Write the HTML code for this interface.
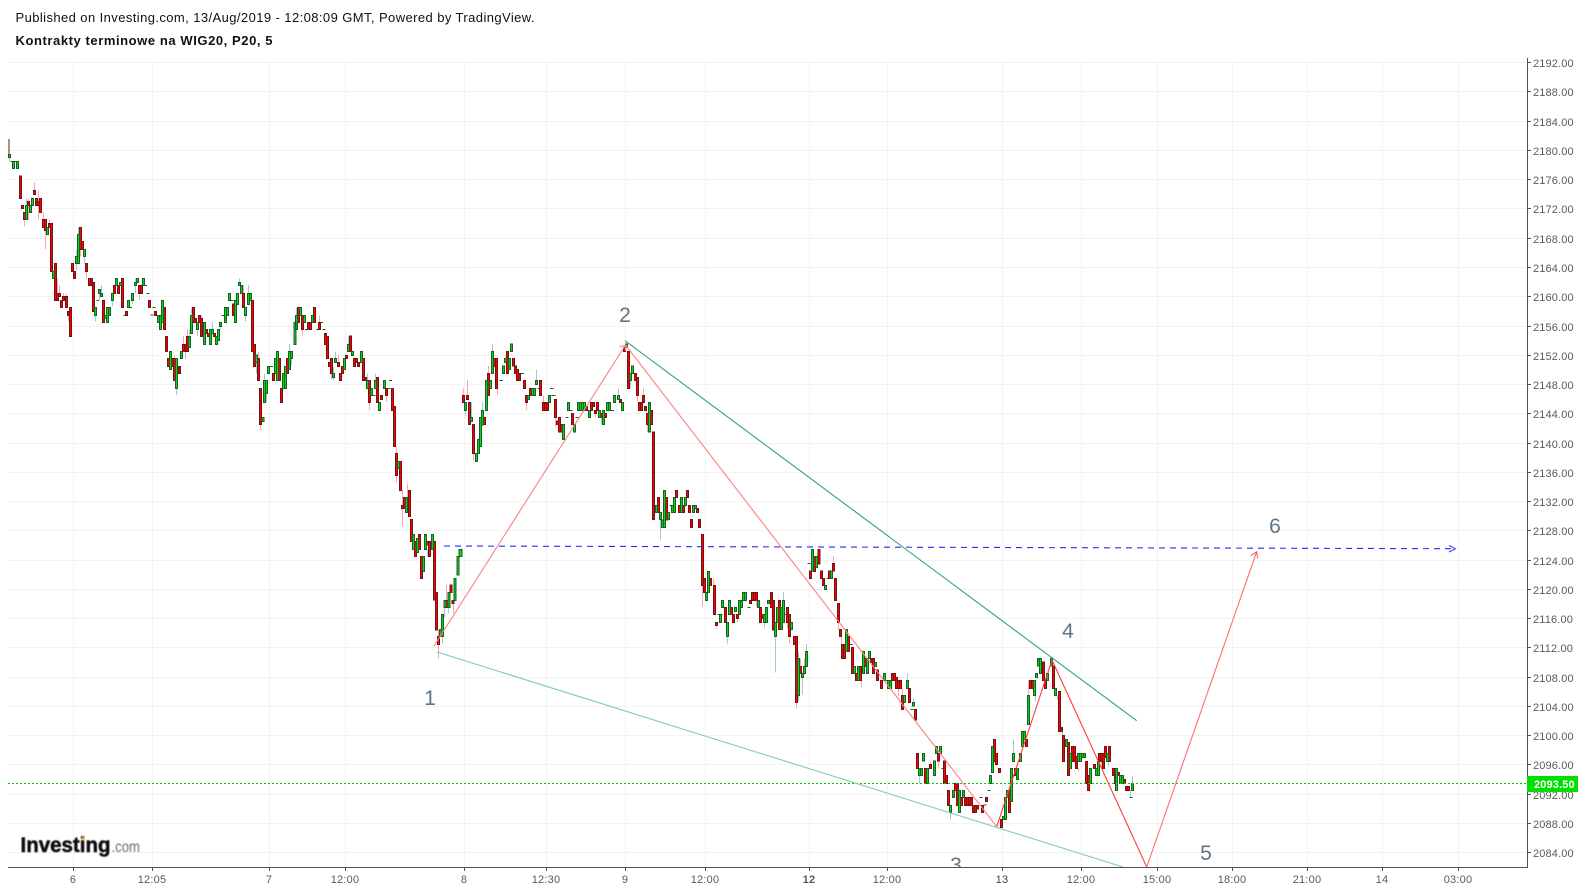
<!DOCTYPE html>
<html><head><meta charset="utf-8"><title>Kontrakty terminowe na WIG20</title>
<style>html,body{margin:0;padding:0;background:#fff;width:1585px;height:892px;overflow:hidden}svg{display:block;font-family:"Liberation Sans",Arial,sans-serif}</style></head>
<body>
<svg width="1585" height="892" viewBox="0 0 1585 892" xmlns="http://www.w3.org/2000/svg">
<defs><clipPath id="c"><rect x="8" y="40" width="1519" height="827.5"/></clipPath>
<filter id="b" x="-5%" y="-20%" width="110%" height="140%"><feGaussianBlur stdDeviation="0.4"/></filter>
<style>.wr{fill:none;stroke:#ffa3b3;stroke-width:3}.wg{fill:none;stroke:#a3cbd2;stroke-width:3}.br{fill:#f00;stroke:#6e1414;stroke-width:3}.bg{fill:#0d0;stroke:#1d5a30;stroke-width:3}.d{fill:none;stroke:#1d5a30;stroke-width:3}</style></defs>
<text x="15.5" y="22" font-size="13" fill="#111" textLength="519">Published on Investing.com, 13/Aug/2019 - 12:08:09 GMT, Powered by TradingView.</text>
<text x="15.5" y="45" font-size="13" font-weight="bold" fill="#111" textLength="257">Kontrakty terminowe na WIG20, P20, 5</text>
<g stroke="#f3f3f3" stroke-width="1" shape-rendering="crispEdges" fill="none">
<path d="M8 62.5H1527M8 91.5H1527M8 121.5H1527M8 150.5H1527M8 179.5H1527M8 208.5H1527M8 238.5H1527M8 267.5H1527M8 296.5H1527M8 326.5H1527M8 355.5H1527M8 384.5H1527M8 413.5H1527M8 443.5H1527M8 472.5H1527M8 501.5H1527M8 530.5H1527M8 560.5H1527M8 589.5H1527M8 618.5H1527M8 647.5H1527M8 677.5H1527M8 706.5H1527M8 735.5H1527M8 764.5H1527M8 794.5H1527M8 823.5H1527M8 852.5H1527"/>
<path d="M73.5 62V868M152.5 62V868M269.5 62V868M345.5 62V868M464.5 62V868M546.5 62V868M625.5 62V868M705.5 62V868M809.5 62V868M887.5 62V868M1002.5 62V868M1081.5 62V868M1157.5 62V868M1232.5 62V868M1307.5 62V868M1382.5 62V868M1458.5 62V868"/>
</g>
<g clip-path="url(#c)">
<g shape-rendering="crispEdges">
<g transform="translate(.5,130) scale(.33333)">
<path class="wr" d="M102 158V181M114 181V268M84 205V268M72 269V290M129 248V290M135 302V357M147 268V280M171 445V490M177 465V490M189 490V500M198 490V500M204 556V575M240 358V380M258 425V445M417 490V510M522 675V690M549 618V643M561 598V619M603 556V570M729 465V490M774 664V685M780 884V900M906 598V618M957 556V578M993 731V748M1014 675V697"/>
<path class="wg" d="M27 83V94M78 205V226M228 358V422M234 291V313M252 380V400M285 556V575M297 490V510M303 465V490M336 511V530M396 512V522M405 445V490M528 775V795M555 664V685M567 598V619M573 533V556M591 598V618M636 576V598M660 590V598M717 445V457M735 556V575M744 465V490M768 697V730M792 730V752M798 775V818M867 642V664M873 685V707M888 533V556M999 710V750M1005 664V685M1044 619V643"/>
<path class="d" d="M30 94H55M288 511H296M369 556H383M387 532H395M429 466H440M438 490H447M456 532H465M450 555H459M663 556H672M690 511H699M807 709H817M914 598H932M948 598H957M958 577H967M966 598H975"/>
<path d="M25.5 27V75" stroke="#6e1414" stroke-width="3" fill="none"/>
<path class="br" d="M57 138h6V206h-6zM63 226h6V236h-6zM69 247h6V269h-6zM81 214h6V226h-6zM99 181h6V194h-6zM105 205h6V226h-6zM111 214h6V226h-6zM117 205h6V248h-6zM126 269h6V292h-6zM132 269h6V302h-6zM144 280h6V292h-6zM150 280h6V425h-6zM162 400h6V512h-6zM168 490h6V512h-6zM174 490h6V500h-6zM180 512h6V533h-6zM186 500h6V512h-6zM195 500h6V533h-6zM201 545h6V556h-6zM207 533h6V620h-6zM213 400h6V425h-6zM219 424h6V445h-6zM237 292h6V358h-6zM243 335h6V358h-6zM255 400h6V425h-6zM264 445h6V467h-6zM270 445h6V467h-6zM276 457h6V544h-6zM306 511h6V578h-6zM339 466h6V490h-6zM351 466h6V490h-6zM363 445h6V533h-6zM375 544h6V556h-6zM414 467h6V490h-6zM420 467h6V490h-6zM444 511h6V533h-6zM462 544h6V556h-6zM489 533h6V598h-6zM495 619h6V665h-6zM501 685h6V710h-6zM513 685h6V710h-6zM519 685h6V752h-6zM534 710h6V731h-6zM546 643h6V664h-6zM552 643h6V664h-6zM558 619h6V664h-6zM576 533h6V578h-6zM582 566h6V578h-6zM594 556h6V578h-6zM600 566h6V619h-6zM615 598h6V610h-6zM621 610h6V619h-6zM639 610h6V619h-6zM696 522h6V556h-6zM726 490h6V533h-6zM753 511h6V665h-6zM759 643h6V710h-6zM771 685h6V752h-6zM777 775h6V884h-6zM816 731h6V752h-6zM834 685h6V752h-6zM840 775h6V818h-6zM858 685h6V731h-6zM891 533h6V578h-6zM903 556h6V598h-6zM921 578h6V598h-6zM927 578h6V598h-6zM939 533h6V578h-6zM954 578h6V598h-6zM972 610h6V643h-6zM978 619h6V685h-6zM984 697h6V710h-6zM990 685h6V731h-6zM1011 697h6V710h-6zM1017 731h6V752h-6zM1023 710h6V731h-6zM1035 676h6V685h-6z"/>
<path class="bg" d="M24 73h6V83h-6zM36 94h6V116h-6zM48 94h6V116h-6zM75 226h6V269h-6zM87 226h6V248h-6zM93 205h6V226h-6zM138 292h6V314h-6zM156 425h6V445h-6zM225 380h6V400h-6zM231 313h6V400h-6zM249 358h6V380h-6zM282 533h6V556h-6zM294 478h6V490h-6zM300 490h6V500h-6zM312 556h6V566h-6zM318 533h6V578h-6zM324 533h6V556h-6zM333 490h6V511h-6zM345 445h6V466h-6zM357 457h6V467h-6zM381 511h6V533h-6zM393 490h6V512h-6zM402 457h6V467h-6zM408 445h6V457h-6zM426 445h6V466h-6zM471 556h6V578h-6zM477 556h6V598h-6zM483 511h6V578h-6zM507 664h6V718h-6zM525 685h6V775h-6zM540 664h6V685h-6zM564 619h6V652h-6zM570 556h6V610h-6zM588 578h6V598h-6zM609 578h6V643h-6zM627 598h6V643h-6zM633 598h6V610h-6zM645 619h6V643h-6zM651 598h6V631h-6zM657 578h6V590h-6zM672 533h6V578h-6zM678 533h6V556h-6zM684 490h6V511h-6zM702 511h6V578h-6zM708 490h6V524h-6zM714 457h6V466h-6zM720 466h6V490h-6zM732 533h6V556h-6zM741 490h6V524h-6zM747 490h6V511h-6zM765 675h6V697h-6zM784 862h6V875h-6zM789 752h6V818h-6zM795 752h6V790h-6zM801 710h6V731h-6zM822 685h6V731h-6zM828 664h6V752h-6zM846 730h6V775h-6zM852 710h6V775h-6zM864 664h6V718h-6zM870 664h6V685h-6zM880 578h6V643h-6zM885 556h6V598h-6zM897 533h6V556h-6zM909 556h6V578h-6zM933 556h6V578h-6zM996 731h6V742h-6zM1002 685h6V697h-6zM1029 685h6V718h-6zM1041 643h6V664h-6z"/>
</g>
<g transform="translate(350.5,330) scale(.33333)">
<path class="wr" d="M57 218V240M108 197V215M138 349V370M138 437V458M156 480V590M171 460V510M264 900V985M288 765V812M309 821V850M339 175V196M351 150V196M369 370V392M414 108V130M441 176V195M528 218V240M579 196V218M615 262V290M735 250V262M861 196V215M879 175V196M891 284V306"/>
<path class="wg" d="M51 130V151M75 130V151M231 658V680M276 920V940M282 833V863M294 833V850M345 241V260M363 218V262M396 216V241M426 42V64M558 118V151M753 262V284M804 175V196M840 151V175M930 568V632"/>
<path class="d" d="M66 196H75M105 176H120M116 151H125M447 151H458M510 130H521M561 175H570M598 175H609M603 196H615M645 262H654M657 241H666M675 262H684M780 241H791M957 527H970"/>
<path class="br" d="M-3 18h6V64h-6zM9 85h6V110h-6zM15 85h6V97h-6zM21 97h6V110h-6zM36 85h6V151h-6zM42 142h6V151h-6zM54 151h6V218h-6zM78 142h6V218h-6zM90 196h6V208h-6zM105 176h6V197h-6zM123 176h6V241h-6zM129 230h6V349h-6zM135 370h6V437h-6zM147 394h6V481h-6zM153 527h6V535h-6zM159 503h6V535h-6zM174 481h6V560h-6zM180 568h6V635h-6zM192 635h6V680h-6zM204 613h6V658h-6zM210 680h6V745h-6zM228 635h6V645h-6zM234 635h6V680h-6zM249 635h6V810h-6zM255 787h6V900h-6zM261 920h6V943h-6zM286 812h6V833h-6zM298 765h6V787h-6zM304 812h6V821h-6zM336 196h6V218h-6zM348 196h6V208h-6zM354 218h6V283h-6zM366 283h6V370h-6zM399 262h6V283h-6zM411 130h6V196h-6zM429 85h6V110h-6zM435 85h6V176h-6zM468 64h6V130h-6zM486 85h6V108h-6zM492 108h6V130h-6zM498 118h6V151h-6zM504 130h6V151h-6zM519 151h6V176h-6zM525 196h6V218h-6zM537 176h6V196h-6zM567 151h6V196h-6zM576 218h6V241h-6zM582 218h6V241h-6zM588 218h6V241h-6zM612 208h6V262h-6zM618 273h6V284h-6zM624 262h6V306h-6zM630 284h6V306h-6zM663 250h6V283h-6zM705 230h6V241h-6zM720 218h6V241h-6zM726 218h6V230h-6zM732 241h6V250h-6zM738 218h6V241h-6zM750 250h6V262h-6zM762 250h6V262h-6zM807 208h6V218h-6zM819 52h6V64h-6zM831 64h6V175h-6zM852 130h6V151h-6zM858 142h6V196h-6zM864 218h6V241h-6zM870 218h6V241h-6zM876 196h6V218h-6zM882 230h6V241h-6zM888 250h6V284h-6zM900 241h6V284h-6zM906 306h6V568h-6zM921 503h6V548h-6zM945 503h6V570h-6zM975 481h6V503h-6zM984 527h6V548h-6zM996 527h6V548h-6zM1008 481h6V503h-6zM1014 527h6V548h-6zM1020 568h6V592h-6zM1038 535h6V548h-6z"/>
<path class="bg" d="M3 64h6V77h-6zM30 64h6V97h-6zM48 151h6V176h-6zM60 176h6V197h-6zM72 151h6V176h-6zM84 218h6V241h-6zM99 151h6V176h-6zM141 394h6V415h-6zM165 503h6V548h-6zM186 613h6V658h-6zM198 625h6V668h-6zM216 680h6V725h-6zM222 613h6V658h-6zM243 613h6V658h-6zM267 898h6V920h-6zM273 853h6V920h-6zM280 812h6V833h-6zM292 787h6V833h-6zM310 745h6V812h-6zM320 680h6V735h-6zM326 658h8V680h-8zM342 218h6V241h-6zM360 262h6V275h-6zM375 370h6V394h-6zM381 328h6V370h-6zM387 262h6V349h-6zM393 241h6V285h-6zM405 151h6V241h-6zM417 151h6V176h-6zM423 64h6V130h-6zM456 108h6V130h-6zM462 85h6V97h-6zM474 85h6V118h-6zM480 42h6V64h-6zM531 196h6V208h-6zM543 176h6V196h-6zM549 176h6V196h-6zM555 151h6V163h-6zM594 196h6V218h-6zM636 283h6V328h-6zM651 218h6V241h-6zM669 283h6V306h-6zM681 218h6V241h-6zM687 218h6V241h-6zM693 218h6V241h-6zM699 218h6V241h-6zM714 241h6V262h-6zM744 241h6V262h-6zM756 241h6V283h-6zM768 218h6V241h-6zM774 218h6V241h-6zM789 196h6V218h-6zM801 196h6V208h-6zM813 218h6V241h-6zM825 42h6V52h-6zM837 130h6V151h-6zM843 108h6V130h-6zM894 218h6V306h-6zM915 527h6V548h-6zM927 548h6V568h-6zM933 570h6V592h-6zM939 481h6V592h-6zM951 548h6V568h-6zM963 527h6V548h-6zM969 503h6V548h-6zM990 503h6V548h-6zM1002 503h6V527h-6zM1026 527h6V548h-6zM1032 527h6V535h-6z"/>
</g>
<g transform="translate(640.5,470) scale(.33333)">
<path class="wr" d="M186 347V410M219 325V347M228 466V476M291 446V457M348 391V410M441 457V475M447 500V520M468 697V716M480 566V590M579 258V280M594 457V478M603 500V520M663 632V653M774 655V680M786 655V680"/>
<path class="wg" d="M261 500V520M372 457V475M405 500V608M429 366V391M474 545V566M474 677V695M486 622V675M492 566V590M498 522V545M801 610V632M819 686V697"/>
<path class="d" d="M231 433H246M321 412H330M429 433H441M501 280H510M558 325H567M627 523H636M735 632H744M810 718H819"/>
<path class="br" d="M150 148h6V172h-6zM174 148h6V172h-6zM183 193h6V347h-6zM189 325h6V368h-6zM207 325h6V347h-6zM219 347h6V433h-6zM225 457h6V466h-6zM252 412h6V457h-6zM270 412h6V433h-6zM276 433h6V457h-6zM288 433h6V446h-6zM327 391h6V400h-6zM333 368h6V391h-6zM339 368h6V391h-6zM345 368h6V391h-6zM357 412h6V457h-6zM363 433h6V446h-6zM390 368h6V412h-6zM396 391h6V480h-6zM414 391h6V478h-6zM438 412h6V457h-6zM444 433h6V500h-6zM459 500h6V523h-6zM465 500h6V697h-6zM477 590h6V610h-6zM507 303h6V325h-6zM519 260h6V305h-6zM533 238h6V282h-6zM540 303h6V325h-6zM546 325h6V346h-6zM564 303h6V325h-6zM576 280h6V303h-6zM582 325h6V391h-6zM591 400h6V457h-6zM597 478h6V500h-6zM603 523h6V566h-6zM609 523h6V566h-6zM621 500h6V545h-6zM633 533h6V610h-6zM645 610h6V632h-6zM657 590h6V632h-6zM672 566h6V590h-6zM690 566h6V578h-6zM696 566h6V610h-6zM708 600h6V632h-6zM720 632h6V655h-6zM753 610h6V632h-6zM759 610h6V632h-6zM765 622h6V655h-6zM771 632h6V655h-6zM777 632h6V655h-6zM783 677h6V718h-6zM804 655h6V697h-6zM822 718h6V750h-6z"/>
<path class="bg" d="M195 368h6V391h-6zM201 305h6V368h-6zM237 433h6V457h-6zM243 391h6V412h-6zM258 457h6V500h-6zM264 391h6V433h-6zM282 412h6V424h-6zM294 391h6V433h-6zM300 391h6V412h-6zM306 368h6V391h-6zM312 368h6V391h-6zM351 391h6V412h-6zM369 433h6V457h-6zM375 412h6V457h-6zM381 391h6V400h-6zM402 457h6V500h-6zM408 412h6V457h-6zM420 412h6V478h-6zM426 391h6V457h-6zM450 457h6V478h-6zM471 566h6V677h-6zM483 610h6V622h-6zM489 590h6V610h-6zM495 545h6V590h-6zM513 238h6V303h-6zM525 260h6V292h-6zM552 346h6V358h-6zM570 303h6V325h-6zM615 478h6V545h-6zM639 590h6V610h-6zM651 590h6V632h-6zM666 545h6V610h-6zM678 566h6V610h-6zM684 545h6V566h-6zM702 578h6V590h-6zM729 610h6V632h-6zM741 632h6V655h-6zM747 632h6V655h-6zM789 677h6V697h-6zM798 632h6V655h-6zM816 697h6V708h-6z"/>
</g>
<g transform="translate(880.5,630) scale(.33333)">
<path class="wr" d="M150 395V415M174 393V414M444 152V196M546 305V328M594 415V425M663 394V415"/>
<path class="wg" d="M117 437V460M210 548V568M399 328V370M465 196V215M531 196V210M750 481V502M756 437V460M684 394V412"/>
<path class="d" d="M183 415H192M297 502H306M309 525H318M321 481H330M747 502H756"/>
<path class="br" d="M108 370h6V415h-6zM132 415h6V460h-6zM147 404h6V415h-6zM171 370h6V393h-6zM189 393h6V460h-6zM195 437h6V460h-6zM201 481h6V527h-6zM222 460h6V481h-6zM228 460h6V527h-6zM240 503h6V527h-6zM252 503h6V527h-6zM258 503h6V527h-6zM264 503h6V527h-6zM270 503h6V527h-6zM276 527h6V548h-6zM282 527h6V548h-6zM288 527h6V537h-6zM303 527h6V548h-6zM315 503h6V514h-6zM339 328h6V394h-6zM345 370h6V404h-6zM354 415h6V427h-6zM360 568h6V592h-6zM384 481h6V548h-6zM402 415h6V437h-6zM435 328h6V349h-6zM447 151h6V176h-6zM453 151h6V176h-6zM486 96h6V151h-6zM492 151h6V176h-6zM516 108h6V176h-6zM534 184h6V305h-6zM540 293h6V305h-6zM546 316h6V394h-6zM561 337h6V437h-6zM573 349h6V394h-6zM579 349h6V394h-6zM585 380h6V415h-6zM615 394h6V460h-6zM621 437h6V481h-6zM639 404h6V415h-6zM654 370h6V394h-6zM660 370h6V394h-6zM666 370h6V415h-6zM672 349h6V382h-6zM684 349h6V394h-6zM696 415h6V437h-6zM702 428h6V460h-6zM711 428h6V437h-6zM729 449h6V460h-6zM735 470h6V481h-6zM741 470h6V481h-6z"/>
<path class="bg" d="M114 415h6V437h-6zM120 415h6V437h-6zM126 370h6V393h-6zM138 415h6V460h-6zM159 393h6V437h-6zM165 349h6V370h-6zM177 349h6V370h-6zM207 527h6V548h-6zM216 481h6V503h-6zM234 481h6V548h-6zM246 481h6V503h-6zM327 437h6V460h-6zM333 349h6V427h-6zM366 560h6V568h-6zM372 503h6V568h-6zM378 481h6V503h-6zM390 415h6V515h-6zM396 370h6V394h-6zM408 415h6V448h-6zM417 370h6V394h-6zM423 305h6V349h-6zM429 305h6V328h-6zM441 196h6V284h-6zM459 151h6V196h-6zM465 130h6V142h-6zM471 85h6V108h-6zM477 85h6V130h-6zM498 130h6V151h-6zM510 85h6V108h-6zM522 176h6V196h-6zM555 328h6V349h-6zM567 370h6V415h-6zM591 370h6V394h-6zM597 370h6V394h-6zM603 370h6V382h-6zM609 370h6V382h-6zM627 415h6V460h-6zM645 415h6V437h-6zM651 394h6V437h-6zM678 370h6V394h-6zM705 415h6V481h-6zM717 437h6V460h-6zM723 437h6V460h-6zM753 460h6V481h-6z"/>
</g>
</g>
<path d="M8 783.5H1527" stroke="#00c800" stroke-width="1" stroke-dasharray="2 2" fill="none"/>
<path d="M444 546L1455 548.7" stroke="#2a2aff" stroke-width="1.1" stroke-dasharray="6 5" fill="none"/>
<path d="M1449 545.5L1455.5 548.7L1449 552" stroke="#3a3aff" stroke-width="1" fill="none"/>
<path d="M437 652L1123 867" stroke="#7fcdb6" stroke-width="1.1" fill="none"/>
<path d="M625 340.7L1136.7 720.7" stroke="#2fa08c" stroke-width="1.1" fill="none"/>
<path d="M434 646L625.5 345L996.7 826.7" stroke="#ff8080" stroke-width="1.1" fill="none"/>
<path d="M996.7 826.7L1052 660L1146.7 867" stroke="#ff3b3b" stroke-width="1.1" fill="none"/>
<path d="M1146.7 867L1256.7 551.7" stroke="#ff6e6e" stroke-width="1.1" fill="none"/>
<path d="M1251 555.5L1256.7 551.7L1257.5 558.5" stroke="#ff5050" stroke-width="1" fill="none"/>
<path d="M619.5 347L625.5 345L625.5 351" stroke="#ff8080" stroke-width="1" fill="none"/>
<g fill="#5f7385" font-size="21" text-anchor="middle">
<text x="430" y="705">1</text><text x="625" y="322">2</text><text x="956" y="872">3</text><text x="1068" y="638">4</text><text x="1206" y="860">5</text><text x="1275" y="533">6</text>
</g>
</g>
<g filter="url(#b)">
<text x="20.5" y="852" font-size="21" font-weight="bold" fill="#111" textLength="90" lengthAdjust="spacingAndGlyphs" stroke="#111" stroke-width=".5">Investing</text>
<text x="111.5" y="852" font-size="16" fill="#6a6a6a" textLength="28.5" lengthAdjust="spacingAndGlyphs">.com</text>
</g>
<path d="M81 839L84.5 835L85 839Z" fill="#f5a623"/>
<g fill="none" stroke="#535353" stroke-width="1" shape-rendering="crispEdges">
<path d="M8 867.5H1527.5V58"/>
<path d="M73.5 868V871M152.5 868V871M269.5 868V871M345.5 868V871M464.5 868V871M546.5 868V871M625.5 868V871M705.5 868V871M809.5 868V871M887.5 868V871M1002.5 868V871M1081.5 868V871M1157.5 868V871M1232.5 868V871M1307.5 868V871M1382.5 868V871M1458.5 868V871"/>
<path d="M1528 62.5H1531M1528 91.5H1531M1528 121.5H1531M1528 150.5H1531M1528 179.5H1531M1528 208.5H1531M1528 238.5H1531M1528 267.5H1531M1528 296.5H1531M1528 326.5H1531M1528 355.5H1531M1528 384.5H1531M1528 413.5H1531M1528 443.5H1531M1528 472.5H1531M1528 501.5H1531M1528 530.5H1531M1528 560.5H1531M1528 589.5H1531M1528 618.5H1531M1528 647.5H1531M1528 677.5H1531M1528 706.5H1531M1528 735.5H1531M1528 764.5H1531M1528 794.5H1531M1528 823.5H1531M1528 852.5H1531"/>
</g>
<g font-size="11" fill="#5a5a5a" text-anchor="start" letter-spacing=".15">
<text x="1533" y="67">2192.00</text><text x="1533" y="96">2188.00</text><text x="1533" y="126">2184.00</text><text x="1533" y="155">2180.00</text><text x="1533" y="184">2176.00</text><text x="1533" y="213">2172.00</text><text x="1533" y="243">2168.00</text><text x="1533" y="272">2164.00</text><text x="1533" y="301">2160.00</text><text x="1533" y="331">2156.00</text><text x="1533" y="360">2152.00</text><text x="1533" y="389">2148.00</text><text x="1533" y="418">2144.00</text><text x="1533" y="448">2140.00</text><text x="1533" y="477">2136.00</text><text x="1533" y="506">2132.00</text><text x="1533" y="535">2128.00</text><text x="1533" y="565">2124.00</text><text x="1533" y="594">2120.00</text><text x="1533" y="623">2116.00</text><text x="1533" y="652">2112.00</text><text x="1533" y="682">2108.00</text><text x="1533" y="711">2104.00</text><text x="1533" y="740">2100.00</text><text x="1533" y="769">2096.00</text><text x="1533" y="799">2092.00</text><text x="1533" y="828">2088.00</text><text x="1533" y="857">2084.00</text>
</g>
<rect x="1527" y="776" width="51" height="16" fill="#00e000"/>
<text x="1534" y="788" font-size="11" font-weight="bold" fill="#fff" letter-spacing=".15">2093.50</text>
<g font-size="11" fill="#5a5a5a" text-anchor="middle" letter-spacing=".2">
<text x="73" y="883">6</text><text x="152" y="883">12:05</text><text x="269" y="883">7</text><text x="345" y="883">12:00</text><text x="464" y="883">8</text><text x="546" y="883">12:30</text><text x="625" y="883">9</text><text x="705" y="883">12:00</text><text x="809" y="883" font-weight="bold">12</text><text x="887" y="883">12:00</text><text x="1002" y="883" fill="#444">13</text><text x="1081" y="883">12:00</text><text x="1157" y="883">15:00</text><text x="1232" y="883">18:00</text><text x="1307" y="883">21:00</text><text x="1382" y="883">14</text><text x="1458" y="883">03:00</text>
</g>
</svg>
</body></html>
